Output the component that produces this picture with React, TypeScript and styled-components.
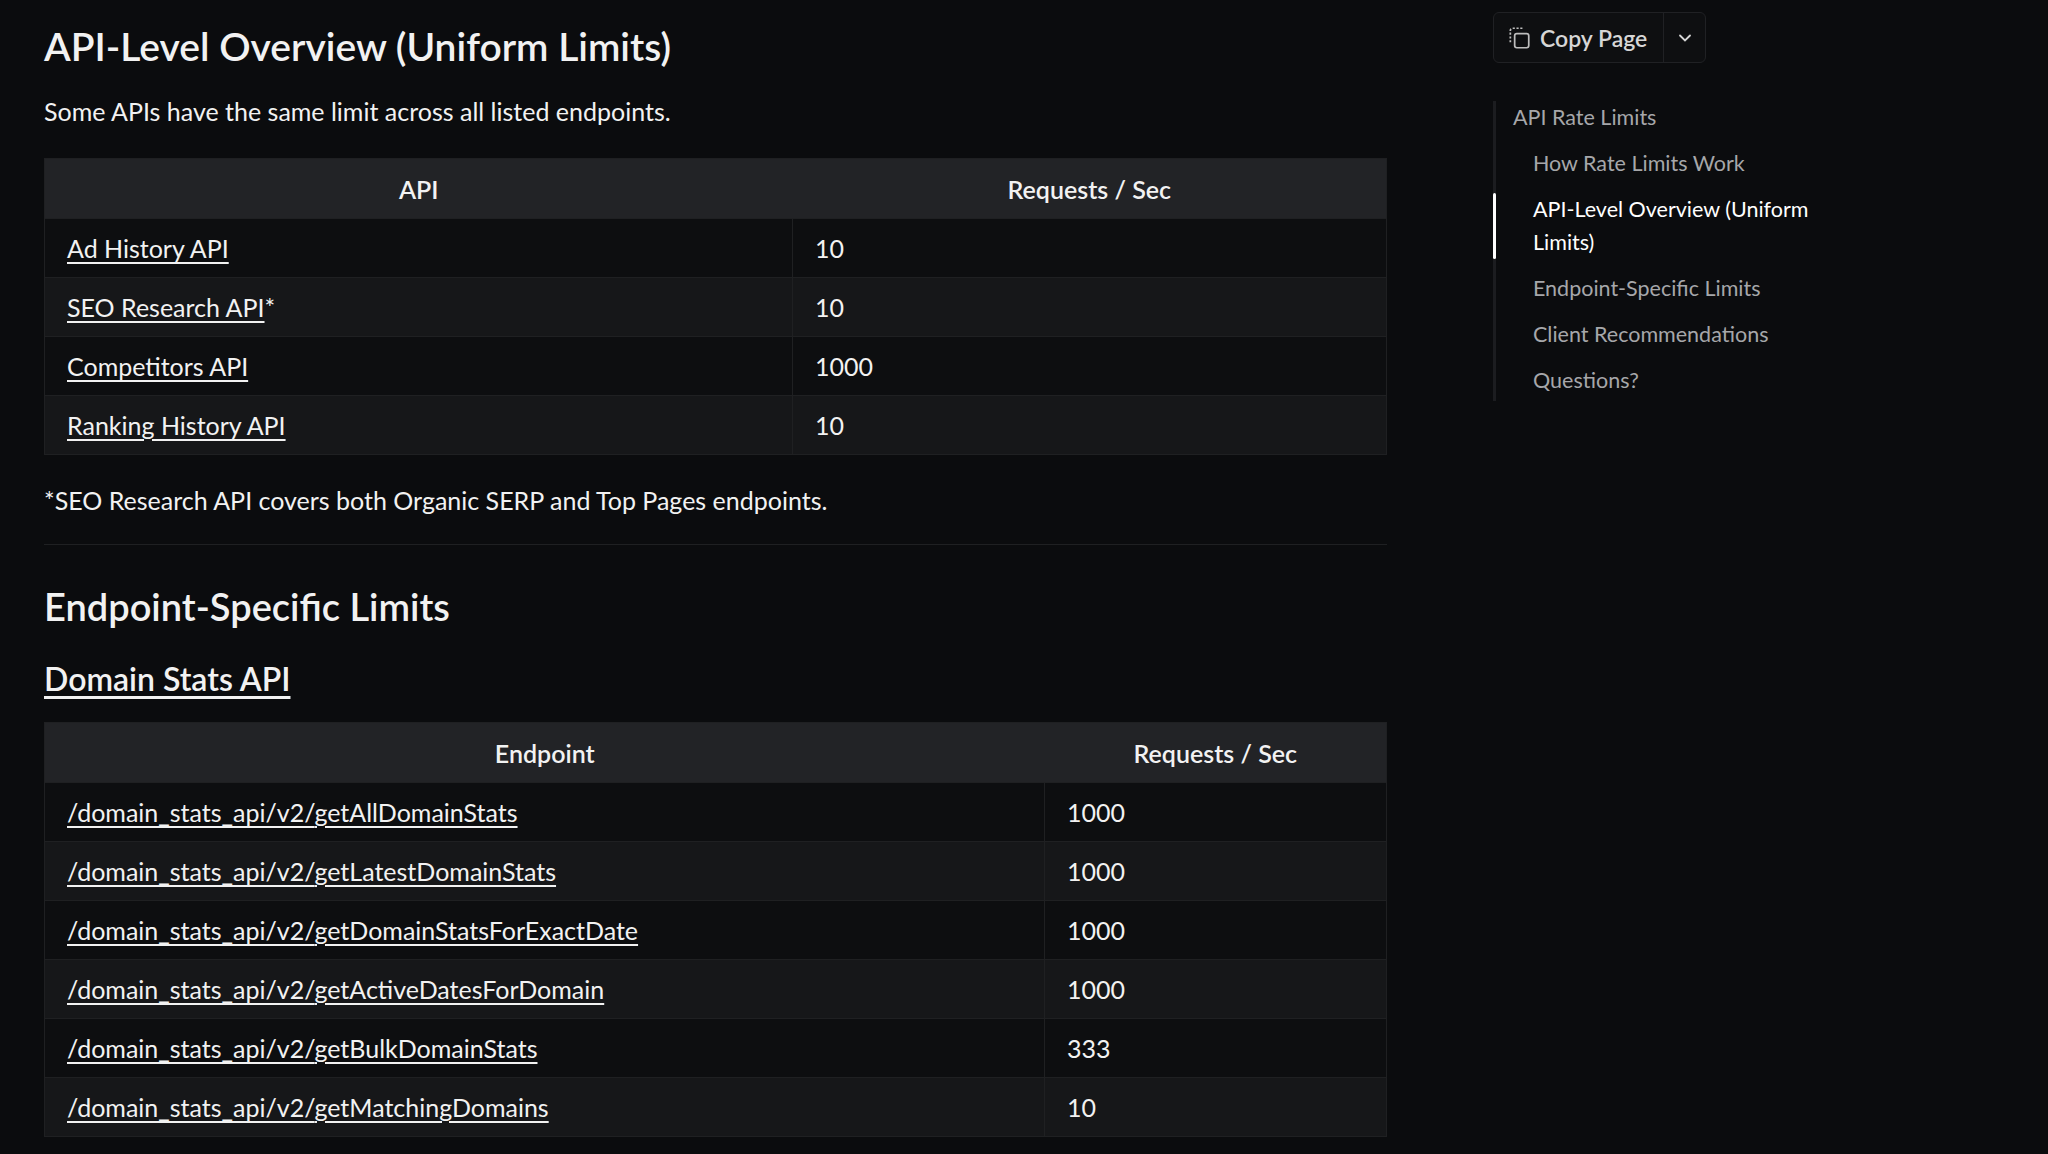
import React from "react";
import styled, { createGlobalStyle } from "styled-components";

const Global = createGlobalStyle`
  html, body { margin: 0; padding: 0; background: #0b0c0e; }
  body { font-family: Lato, "Open Sans", sans-serif; color: #f2f2f2; }
`;

const Page = styled.div`
  display: flex;
  height: 1154px;
  overflow: hidden;
  background: #0b0c0e;
`;
const Main = styled.main`
  width: 1343px;
  margin-left: 44px;
  padding-top: 20px;
`;
const H1 = styled.h1`
  font-size: 39px;
  font-weight: 600;
  margin: 0 0 22px;
  line-height: 52px;
`;
const P = styled.p<{ $foot?: boolean }>`
  font-size: 25px;
  margin: ${(p) => (p.$foot ? "28px 0 0" : "0 0 30px")};
  line-height: 34px;
`;
const Table = styled.table`
  width: 100%;
  border-collapse: collapse;
  font-size: 25px;
  border: 1px solid #1f2022;
`;
const Th = styled.th`
  background: #222326;
  height: 57px;
  font-weight: 600;
  text-align: center;
`;
const Tr = styled.tr<{ $alt: boolean }>`
  background: ${(p) => (p.$alt ? "#161719" : "#0d0e10")};
  border-top: 1px solid #1f2022;
`;
const Td = styled.td<{ $w?: string }>`
  height: 58px;
  padding: 0 22px;
  width: ${(p) => p.$w || "auto"};
  & + & { border-left: 1px solid #1f2022; }
`;
const A = styled.a`
  color: #f2f2f2;
  text-decoration: underline;
  text-underline-offset: 4px;
`;
const Hr = styled.hr`
  border: 0;
  border-top: 1px solid #1f2022;
  margin: 27px 0 0;
`;
const H2 = styled.h2`
  font-size: 38px;
  font-weight: 600;
  margin: 38px 0 30px;
`;
const H3 = styled.h3`
  font-size: 32px;
  font-weight: 600;
  margin: 0 0 24px;
  text-decoration: underline;
  text-underline-offset: 5px;
`;
const Aside = styled.aside`
  margin-left: 106px;
  padding-top: 12px;
  width: 340px;
`;
const CopyBtn = styled.div`
  display: inline-flex;
  height: 49px;
  border: 1px solid #202124;
  border-radius: 6px;
  background: #0e0f11;
  align-items: stretch;
`;
const CopyMain = styled.div`
  display: flex;
  align-items: center;
  gap: 8px;
  padding: 0 16px 0 12px;
  font-size: 23px;
  font-weight: 600;
  color: #d6d6d6;
  border-right: 1px solid #202124;
`;
const CopyDrop = styled.div`
  display: flex;
  align-items: center;
  justify-content: center;
  width: 41px;
  color: #d6d6d6;
`;
const Toc = styled.nav`
  margin-top: 38px;
  border-left: 3px solid #1c1d20;
  display: flex;
  flex-direction: column;
  gap: 13px;
  padding: 0 0 4px;
`;
const TocItem = styled.div<{ $sub?: boolean; $active?: boolean }>`
  position: relative;
  font-size: 21.5px;
  line-height: 33px;
  padding-left: ${(p) => (p.$sub ? "37px" : "17px")};
  color: ${(p) => (p.$active ? "#ffffff" : "#a6a7aa")};
  ${(p) =>
    p.$active
      ? `&::before{content:"";position:absolute;left:-3px;top:0;bottom:0;width:3px;background:#fff;border-radius:2px;}`
      : ""}
`;

const api = [
  ["Ad History API", "10", ""],
  ["SEO Research API", "10", "*"],
  ["Competitors API", "1000", ""],
  ["Ranking History API", "10", ""],
];
const eps = [
  ["getAllDomainStats", "1000"],
  ["getLatestDomainStats", "1000"],
  ["getDomainStatsForExactDate", "1000"],
  ["getActiveDatesForDomain", "1000"],
  ["getBulkDomainStats", "333"],
  ["getMatchingDomains", "10"],
];

export default function App() {
  return (
    <Page>
      <Global />
      <Main>
        <H1>API-Level Overview (Uniform Limits)</H1>
        <P>Some APIs have the same limit across all listed endpoints.</P>
        <Table>
          <thead>
            <tr>
              <Th>API</Th>
              <Th>Requests / Sec</Th>
            </tr>
          </thead>
          <tbody>
            {api.map((r, i) => (
              <Tr key={r[0]} $alt={i % 2 === 1}>
                <Td $w="703px">
                  <A href="#">{r[0]}</A>
                  {r[2]}
                </Td>
                <Td>{r[1]}</Td>
              </Tr>
            ))}
          </tbody>
        </Table>
        <P $foot>*SEO Research API covers both Organic SERP and Top Pages endpoints.</P>
        <Hr />
        <H2>Endpoint-Specific Limits</H2>
        <H3>Domain Stats API</H3>
        <Table>
          <thead>
            <tr>
              <Th>Endpoint</Th>
              <Th>Requests / Sec</Th>
            </tr>
          </thead>
          <tbody>
            {eps.map((r, i) => (
              <Tr key={r[0]} $alt={i % 2 === 1}>
                <Td $w="955px">
                  <A href="#">/domain_stats_api/v2/{r[0]}</A>
                </Td>
                <Td>{r[1]}</Td>
              </Tr>
            ))}
          </tbody>
        </Table>
      </Main>
      <Aside>
        <CopyBtn>
          <CopyMain>
            <svg width="26" height="26" viewBox="0 0 24 24" fill="none" stroke="#bdbdbd" strokeWidth="1.6">
              <rect x="8" y="8" width="13" height="13" rx="2" />
              <path d="M4 16V5a2 2 0 0 1 2-2h10" strokeDasharray="2 1.5" />
            </svg>
            Copy Page
          </CopyMain>
          <CopyDrop>
            <svg width="20" height="20" viewBox="0 0 24 24" fill="none" stroke="#d6d6d6" strokeWidth="2.2" strokeLinecap="round">
              <path d="M6 9l6 6 6-6" />
            </svg>
          </CopyDrop>
        </CopyBtn>
        <Toc>
          <TocItem>API Rate Limits</TocItem>
          <TocItem $sub>How Rate Limits Work</TocItem>
          <TocItem $sub $active>
            API-Level Overview (Uniform
            <br />
            Limits)
          </TocItem>
          <TocItem $sub>Endpoint-Specific Limits</TocItem>
          <TocItem $sub>Client Recommendations</TocItem>
          <TocItem $sub>Questions?</TocItem>
        </Toc>
      </Aside>
    </Page>
  );
}
